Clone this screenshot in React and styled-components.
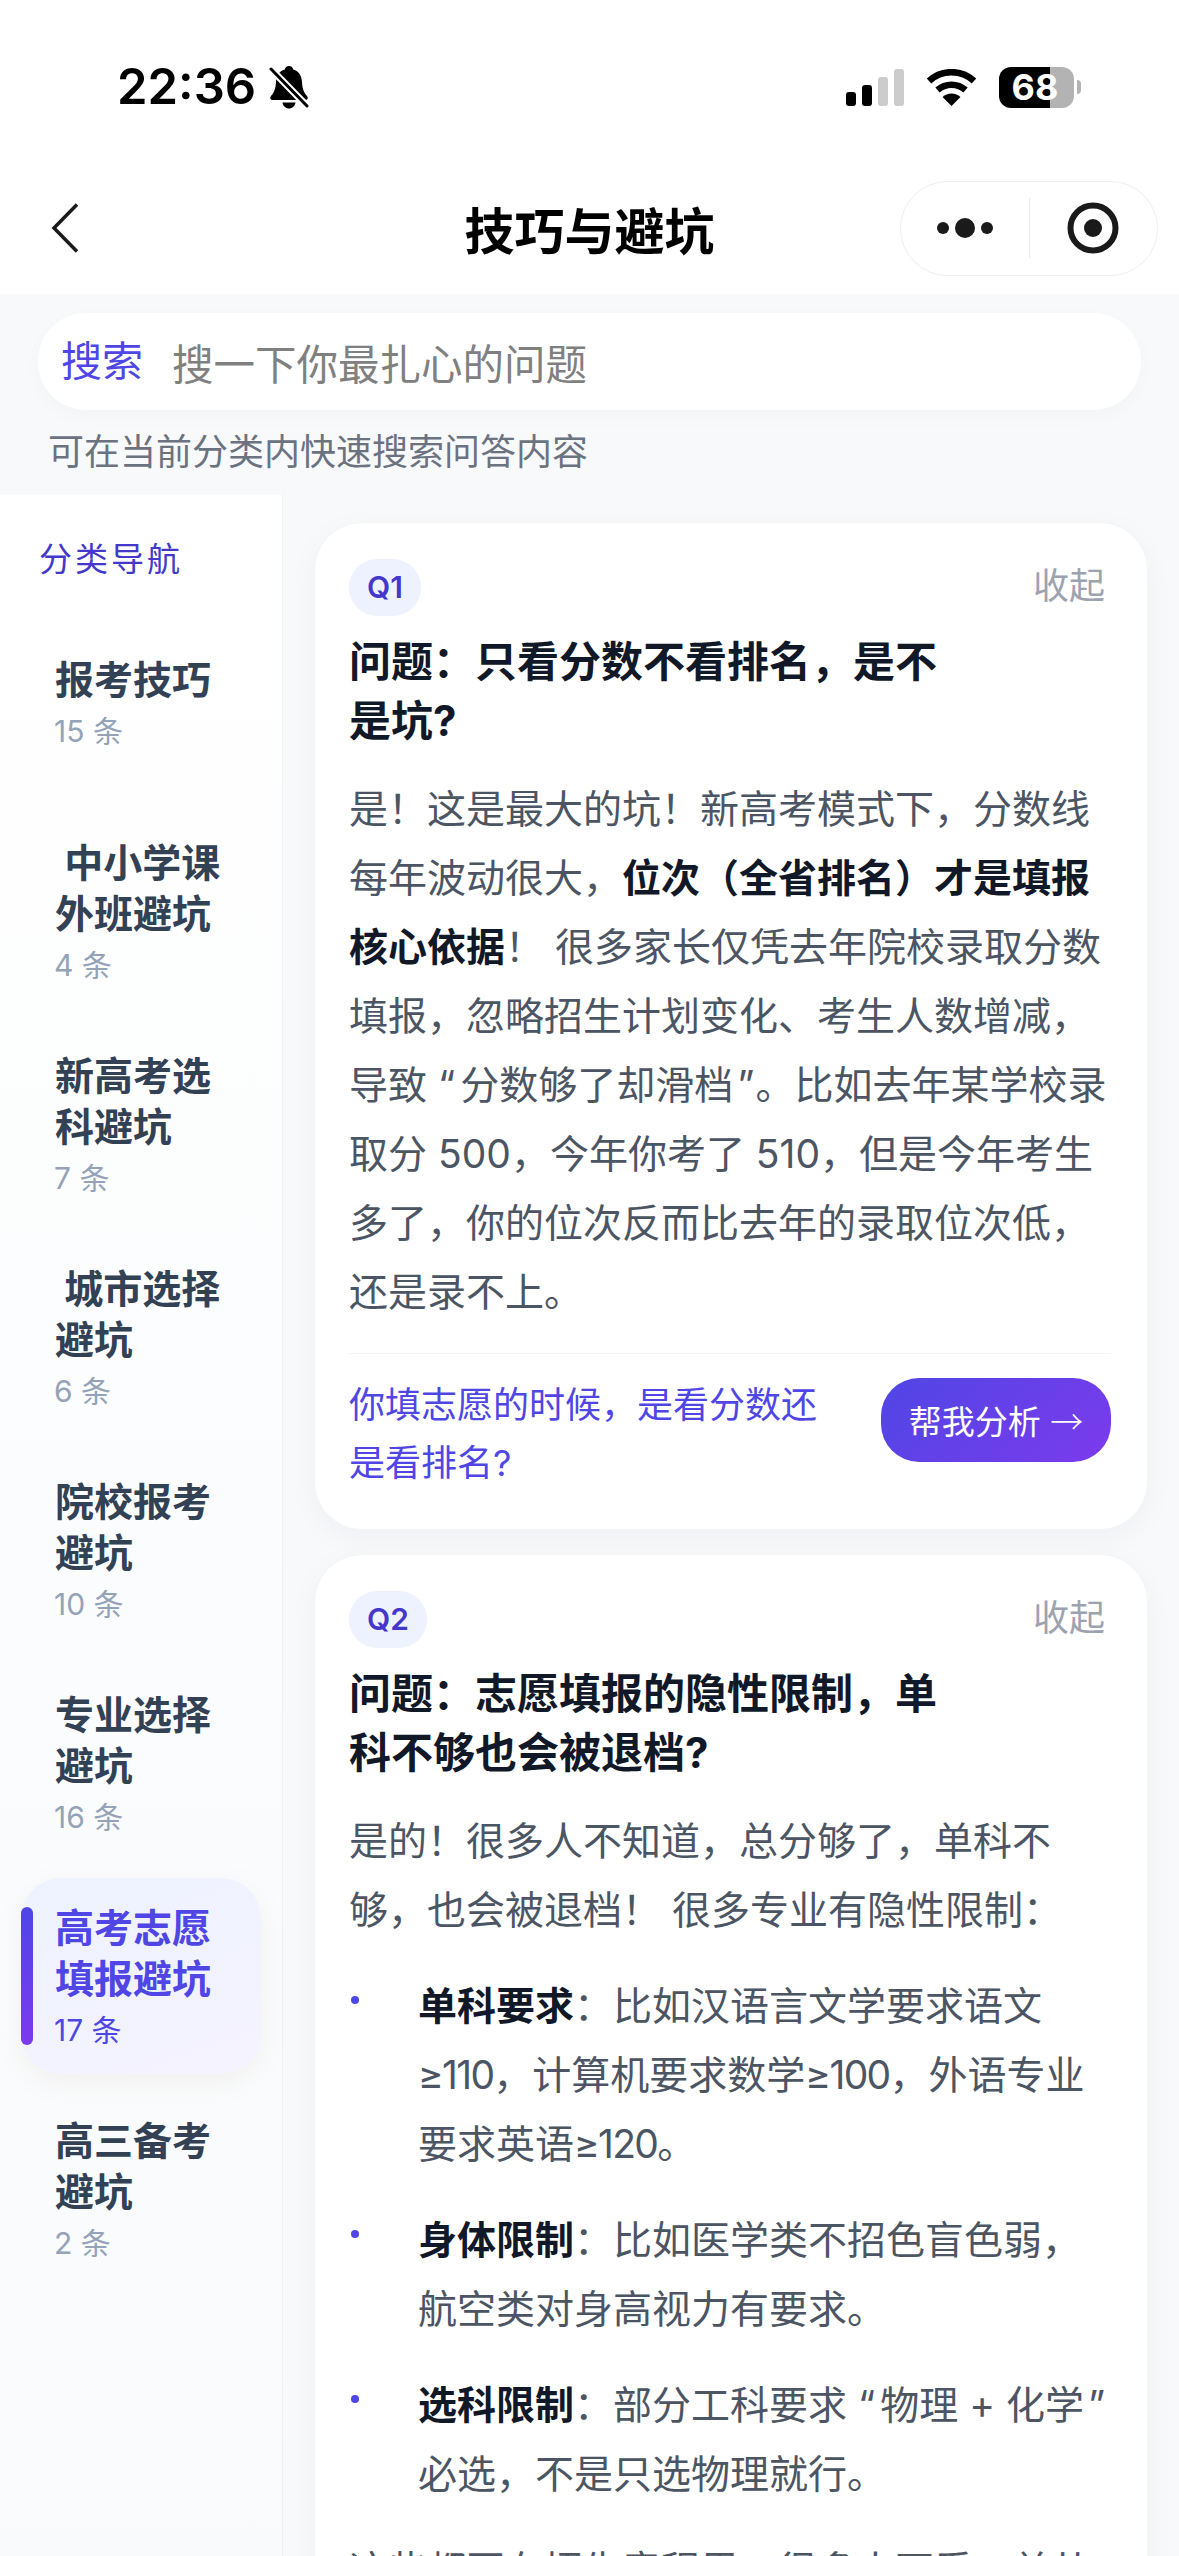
import React from "react";
import styled, { createGlobalStyle } from "styled-components";

const GlobalStyle = createGlobalStyle`
  html, body { margin: 0; padding: 0; background: #fff; }
  * { box-sizing: border-box; }
  body { font-family: Inter, "Noto Sans CJK SC", sans-serif; }
`;

const Page = styled.div`
  width: 1179px;
  height: 2556px;
  overflow: hidden;
  display: flex;
  flex-direction: column;
  background: #f8f9fb;
`;

const Top = styled.header`
  background: #fff;
  flex: none;
`;

const StatusBar = styled.div`
  height: 162px;
  padding: 12px 98px 0 117px;
  display: flex;
  align-items: center;
  justify-content: space-between;
`;

const StatusLeft = styled.div`
  display: flex;
  align-items: center;
  gap: 13px;
`;

const Time = styled.span`
  font-family: Inter, sans-serif;
  font-size: 49px;
  font-weight: 600;
  line-height: 60px;
  color: #000;
`;

const StatusRight = styled.div`
  display: flex;
  align-items: center;
  gap: 22px;
`;

const BatteryWrap = styled.div`
  display: flex;
  align-items: center;
  gap: 3px;
`;

const BatteryBody = styled.div`
  width: 75px;
  height: 41px;
  border-radius: 12px;
  background: linear-gradient(90deg, #000 68%, #b3b3b3 68%);
  color: #fff;
  font-family: Inter, sans-serif;
  font-size: 36px;
  font-weight: 700;
  line-height: 41px;
  text-align: center;
  padding-right: 3px;
`;

const BatteryTip = styled.div`
  width: 4px;
  height: 14px;
  border-radius: 0 4px 4px 0;
  background: #b3b3b3;
`;

const NavBar = styled.nav`
  height: 132px;
  padding: 0 21px;
  display: grid;
  grid-template-columns: minmax(0, 1fr) auto minmax(0, 1fr);
  align-items: center;
`;

const BackButton = styled.div`
  margin-left: 30px;
  display: flex;
  align-items: center;
`;

const Title = styled.h1`
  margin: 0;
  font-family: "Noto Sans CJK SC", sans-serif;
  font-size: 50px;
  font-weight: 600;
  line-height: 60px;
  color: #000;
`;

const Capsule = styled.div`
  justify-self: end;
  width: 258px;
  height: 95px;
  border: 1px solid #eeeeee;
  border-radius: 48px;
  background: #fff;
  display: flex;
  align-items: center;
`;

const CapsuleCell = styled.div`
  flex: 1;
  display: flex;
  align-items: center;
  justify-content: center;
`;

const CapsuleDivider = styled.div`
  width: 1px;
  height: 60px;
  background: #e8e8e8;
`;

const SearchArea = styled.section`
  flex: none;
  padding: 19px 38px 18px;
`;

const SearchBox = styled.div`
  height: 97px;
  border-radius: 48px;
  background: #fff;
  box-shadow: 0 6px 20px rgba(17, 24, 39, 0.025);
  padding-left: 23px;
  display: flex;
  align-items: center;
  gap: 29px;
`;

const SearchLabel = styled.span`
  font-size: 41px;
  line-height: 50px;
  color: #4f46e5;
  margin-top: -1px;
`;

const SearchPlaceholder = styled.span`
  font-size: 41.5px;
  line-height: 50px;
  color: #808080;
  margin-top: 7px;
`;

const Hint = styled.p`
  margin: 17px 0 0 10px;
  font-size: 36px;
  line-height: 50px;
  color: #6b7280;
`;

const Body = styled.main`
  flex: 1;
  min-height: 0;
  display: flex;
`;

const Sidebar = styled.aside`
  flex: none;
  width: 283px;
  background: linear-gradient(180deg, #ffffff 0%, #f8fafc 100%);
  border-right: 1px solid #eef1f5;
  padding: 40px 21px 0;
`;

const SideHeading = styled.div`
  margin-left: 18px;
  font-size: 33px;
  letter-spacing: 3px;
  line-height: 48px;
  color: #4338ca;
`;

const SideList = styled.div`
  margin-top: 47px;
  display: flex;
  flex-direction: column;
  gap: 17px;
`;

const SideItem = styled.div`
  position: relative;
  min-height: 166px;
  width: 240px;
  padding: 24px 30px 24px 34px;
  border-radius: 40px;
  background: ${(p) => (p.$active ? "linear-gradient(160deg, #eef2ff 0%, #f5f3ff 100%)" : "transparent")};
  box-shadow: ${(p) => (p.$active ? "0 8px 26px rgba(180, 150, 110, 0.1)" : "none")};
`;

const SideBar = styled.span`
  position: absolute;
  left: 0;
  top: 29px;
  width: 12px;
  height: 138px;
  border-radius: 6px;
  background: linear-gradient(180deg, #4f46e5 0%, #7c3aed 100%);
`;

const SideTitle = styled.div`
  font-size: 39px;
  font-weight: 700;
  line-height: 51px;
  white-space: pre-wrap;
  color: ${(p) => (p.$active ? "#4f46e5" : "#334155")};
`;

const SideCount = styled.div`
  margin-top: 6px;
  margin-left: -1px;
  font-size: 30px;
  line-height: 40px;
  color: ${(p) => (p.$active ? "#4f46e5" : "#94a3b8")};
`;

const Content = styled.div`
  flex: 1;
  min-width: 0;
  padding: 27px 31px 0;
  display: flex;
  flex-direction: column;
  gap: 24px;
`;

const Card = styled.article`
  flex: none;
  background: #fff;
  border-radius: 48px;
  border: 1px solid #f3f4f6;
  box-shadow: 0 8px 30px rgba(17, 24, 39, 0.04);
  padding: 36px 36px 37px 34px;
`;

const CardHead = styled.div`
  display: flex;
  align-items: center;
  justify-content: space-between;
`;

const Badge = styled.span`
  height: 57px;
  padding: 0 18px;
  border-radius: 28px;
  background: #eef2ff;
  color: #4338ca;
  font-size: 30px;
  font-weight: 600;
  line-height: 57px;
`;

const Collapse = styled.span`
  margin: -4px 6px 0 0;
  font-size: 36px;
  line-height: 50px;
  color: #9ca3af;
`;

const Question = styled.h2`
  margin: 16px 0 0;
  max-width: 620px;
  font-size: 42px;
  font-weight: 700;
  line-height: 59px;
  color: #111827;
`;

const Answer = styled.div`
  margin-top: 24px;
  font-size: 39px;
  line-height: 69px;
  color: #4b5563;
`;

const Para = styled.p`
  margin: 0;
`;

const Strong = styled.strong`
  font-weight: 700;
  color: #111827;
`;

const OpenQuote = styled.span`
  margin-right: 5px;
`;

const CloseQuote = styled.span`
  margin-left: 4px;
  margin-right: 1px;
`;

const Num = styled.span`
  letter-spacing: -1.7px;
`;

const List = styled.ul`
  list-style: none;
  margin: 27px 0;
  padding: 0;
  display: flex;
  flex-direction: column;
  gap: 27px;
`;

const ListItem = styled.li`
  display: flex;
  align-items: flex-start;
`;

const Dot = styled.span`
  flex: none;
  width: 8px;
  height: 8px;
  margin: 25px 59px 0 2px;
  border-radius: 50%;
  background: #4f46e5;
`;

const CardFoot = styled.div`
  margin-top: 27px;
  padding-top: 22px;
  border-top: 1px solid #f3f4f6;
  display: flex;
  align-items: flex-start;
  justify-content: space-between;
  gap: 40px;
`;

const Prompt = styled.div`
  flex: 1;
  font-size: 36px;
  line-height: 58px;
  color: #4f46e5;
`;

const AskButton = styled.button`
  flex: none;
  width: 230px;
  height: 84px;
  margin-top: 2px;
  border: 0;
  border-radius: 38px;
  padding: 0;
  background: linear-gradient(135deg, #4f46e5 0%, #7c3aed 100%);
  color: #fff;
  font-family: inherit;
  font-size: 33px;
  line-height: 84px;
  white-space: nowrap;
`;

const ArrowGlyph = styled.span`
  font-family: "Noto Sans CJK SC", sans-serif;
  font-weight: 300;
`;

const cats = [
  ["报考技巧", "15 条"],
  [" 中小学课外班避坑", "4 条"],
  ["新高考选科避坑", "7 条"],
  [" 城市选择避坑", "6 条"],
  ["院校报考避坑", "10 条"],
  ["专业选择避坑", "16 条"],
  ["高考志愿填报避坑", "17 条", true],
  ["高三备考避坑", "2 条"],
];

const BellOff = () => (
  <svg width="40" height="43" viewBox="0 0 40 43">
    <path d="M20 0c2.400 0 4 1.600 4.200 3.600C30 5 32.600 10 33 16c.4 6 1.400 10 5 14 1.400 1.600.8 4-1.600 4H3.600C1.200 34 .6 31.600 2 30c3.600-4 4.600-8 5-14 .4-6 3-11 8.800-12.400C16 1.600 17.600 0 20 0z" fill="#000" />
    <path d="M13.500 36.500h13c-.5 3.500-3.300 6-6.500 6s-6-2.500-6.500-6z" fill="#000" />
    <path d="M1 2 L39 41" stroke="#fff" strokeWidth="7" />
    <path d="M2 3 L38 40" stroke="#000" strokeWidth="3" strokeLinecap="round" />
  </svg>
);

const Signal = () => (
  <svg width="58" height="37" viewBox="0 0 58 37">
    <rect x="0" y="23" width="10" height="14" rx="3" fill="#000" />
    <rect x="16" y="16" width="10" height="21" rx="3" fill="#000" />
    <rect x="32" y="8" width="10" height="29" rx="3" fill="#ccc" />
    <rect x="48" y="0" width="10" height="37" rx="3" fill="#ccc" />
  </svg>
);

const Wifi = () => (
  <svg width="51" height="37" viewBox="0 0 51 37">
    <path d="M3 12 A33 33 0 0 1 48 12" fill="none" stroke="#000" strokeWidth="6.500" />
    <path d="M11.500 21 A21 21 0 0 1 39.500 21" fill="none" stroke="#000" strokeWidth="6.500" />
    <path d="M25.500 37 L16.500 28 A13 13 0 0 1 34.500 28 Z" fill="#000" />
  </svg>
);

const Back = () => (
  <svg width="28" height="50" viewBox="0 0 28 50">
    <path d="M26 1.500 L3 25 L26 48.500" fill="none" stroke="#1a1a1a" strokeWidth="3.500" />
  </svg>
);

const More = () => (
  <svg width="66" height="20" viewBox="0 0 66 20">
    <circle cx="11" cy="10" r="6" fill="#1a1a1a" />
    <circle cx="33" cy="10" r="10" fill="#1a1a1a" />
    <circle cx="55" cy="10" r="6" fill="#1a1a1a" />
  </svg>
);

const Target = () => (
  <svg width="52" height="52" viewBox="0 0 52 52">
    <circle cx="26" cy="26" r="22.500" fill="none" stroke="#1a1a1a" strokeWidth="6" />
    <circle cx="26" cy="26" r="9" fill="#1a1a1a" />
  </svg>
);

export default function App() {
  return (
    <Page>
      <GlobalStyle />
      <Top>
        <StatusBar>
          <StatusLeft>
            <Time>22:36</Time>
            <BellOff />
          </StatusLeft>
          <StatusRight>
            <Signal />
            <Wifi />
            <BatteryWrap>
              <BatteryBody>68</BatteryBody>
              <BatteryTip />
            </BatteryWrap>
          </StatusRight>
        </StatusBar>
        <NavBar>
          <BackButton>
            <Back />
          </BackButton>
          <Title>技巧与避坑</Title>
          <Capsule>
            <CapsuleCell>
              <More />
            </CapsuleCell>
            <CapsuleDivider />
            <CapsuleCell>
              <Target />
            </CapsuleCell>
          </Capsule>
        </NavBar>
      </Top>
      <SearchArea>
        <SearchBox>
          <SearchLabel>搜索</SearchLabel>
          <SearchPlaceholder>搜一下你最扎心的问题</SearchPlaceholder>
        </SearchBox>
        <Hint>可在当前分类内快速搜索问答内容</Hint>
      </SearchArea>
      <Body>
        <Sidebar>
          <SideHeading>分类导航</SideHeading>
          <SideList>
            {cats.map(([name, count, active]) => (
              <SideItem key={name} $active={active}>
                {active && <SideBar />}
                <SideTitle $active={active}>{name}</SideTitle>
                <SideCount $active={active}>{count}</SideCount>
              </SideItem>
            ))}
          </SideList>
        </Sidebar>
        <Content>
          <Card>
            <CardHead>
              <Badge>Q1</Badge>
              <Collapse>收起</Collapse>
            </CardHead>
            <Question>问题：只看分数不看排名，是不是坑?</Question>
            <Answer>
              <Para>
                是！这是最大的坑！新高考模式下，分数线每年波动很大，
                <Strong>位次（全省排名）才是填报核心依据</Strong>
                ！ 很多家长仅凭去年院校录取分数填报，忽略招生计划变化、考生人数增减，导致 <OpenQuote>“</OpenQuote>分数够了却滑档<CloseQuote>”</CloseQuote>。比如去年某学校录取分 500，今年你考了 510，但是今年考生多了，你的位次反而比去年的录取位次低，还是录不上。
              </Para>
            </Answer>
            <CardFoot>
              <Prompt>你填志愿的时候，是看分数还是看排名?</Prompt>
              <AskButton>
                帮我分析 <ArrowGlyph>→</ArrowGlyph>
              </AskButton>
            </CardFoot>
          </Card>
          <Card>
            <CardHead>
              <Badge>Q2</Badge>
              <Collapse>收起</Collapse>
            </CardHead>
            <Question>问题：志愿填报的隐性限制，单科不够也会被退档?</Question>
            <Answer>
              <Para>是的！很多人不知道，总分够了，单科不够，也会被退档！ 很多专业有隐性限制：</Para>
              <List>
                <ListItem>
                  <Dot />
                  <div>
                    <Strong>单科要求</Strong>：比如汉语言文学要求语文<Num>≥110</Num>，计算机要求数学<Num>≥100</Num>，外语专业要求英语<Num>≥120</Num>。
                  </div>
                </ListItem>
                <ListItem>
                  <Dot />
                  <div>
                    <Strong>身体限制</Strong>：比如医学类不招色盲色弱，航空类对身高视力有要求。
                  </div>
                </ListItem>
                <ListItem>
                  <Dot />
                  <div>
                    <Strong>选科限制</Strong>：部分工科要求 <OpenQuote>“</OpenQuote>物理 + 化学<CloseQuote>”</CloseQuote> 必选，不是只选物理就行。
                  </div>
                </ListItem>
              </List>
              <Para>这些都写在招生章程里，很多人不看，单从</Para>
            </Answer>
          </Card>
        </Content>
      </Body>
    </Page>
  );
}
